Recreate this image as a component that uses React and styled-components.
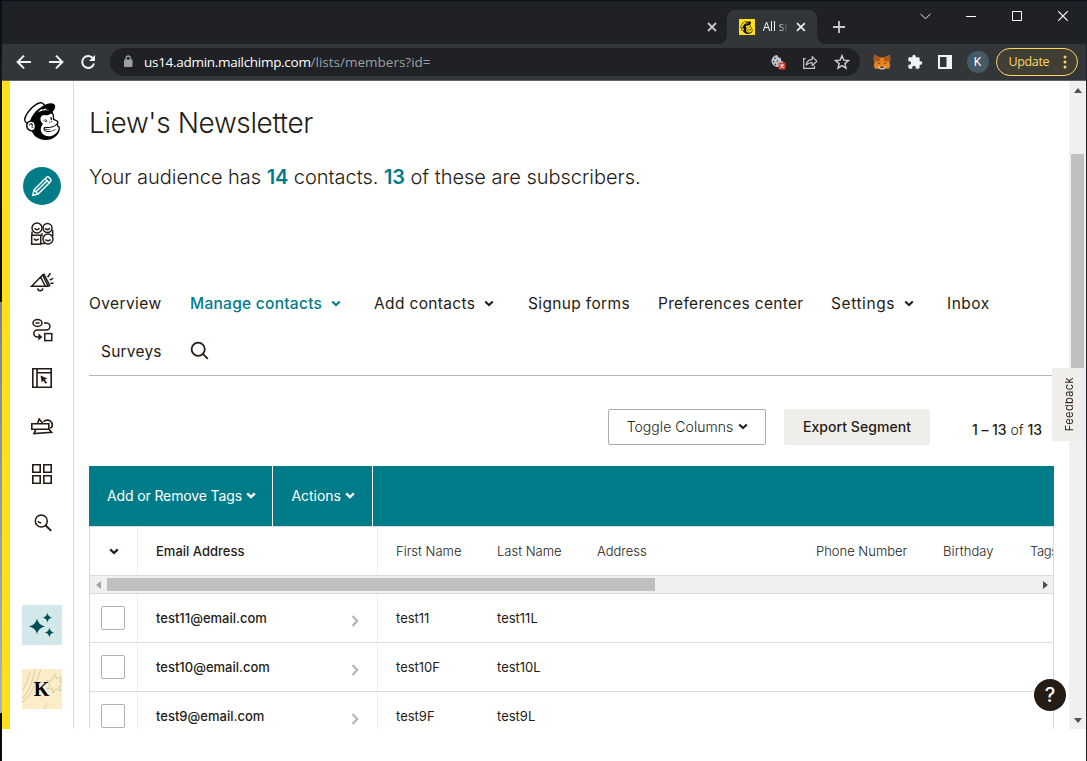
import React from "react";
import styled, { createGlobalStyle, css } from "styled-components";
import { SiMailchimp } from "react-icons/si";

const teal = "#007c89";
const ink = "#241c15";
const sans = `Inter, "Liberation Sans", sans-serif`;
const chromeFont = `"Open Sans", "Noto Sans", sans-serif`;

const Global = createGlobalStyle`
  * { box-sizing: border-box; }
  html, body { margin: 0; padding: 0; background: #fff; overflow: hidden; }
`;

/* ---------- window ---------- */
const Desktop = styled.div`
  display: grid;
  grid-template-columns: 2px 1084px 1px;
  grid-template-rows: 1px 760px;
  width: 1087px;
  height: 761px;
  background: #06121f;
  font-family: ${sans};
  color: ${ink};
`;
const TopEdge = styled.div`
  grid-column: 1 / -1;
  background: #06121f;
`;
const LeftEdge = styled.div`
  background: linear-gradient(#06121f 60px, #16161a 60px, #101014 301px, #7e8287 301px, #a9b2bb 712px, #0c0c0e 712px);
`;
const RightEdge = styled.div`
  background: #17202b;
`;
const Window = styled.div`
  display: flex;
  flex-direction: column;
  min-width: 0;
  background: #fff;
`;

/* ---------- title bar ---------- */
const TitleBar = styled.div`
  display: flex;
  height: 43px;
  background: #202124;
  & > * { flex-shrink: 0; }
`;
const InactiveTab = styled.div`
  display: flex;
  align-items: center;
  justify-content: flex-end;
  width: 725px;
  padding: 9px 10px 0 0;
`;
const ActiveTab = styled.div`
  position: relative;
  display: flex;
  align-items: center;
  width: 90px;
  margin-top: 9px;
  padding: 0 11px 0 12px;
  border-radius: 8px 8px 0 0;
  background: #323639;
  &::before, &::after {
    content: "";
    position: absolute;
    bottom: 0;
    width: 8px;
    height: 8px;
  }
  &::before { left: -8px; background: radial-gradient(circle at 0 0, transparent 7.5px, #323639 8px); }
  &::after { right: -8px; background: radial-gradient(circle at 100% 0, transparent 7.5px, #323639 8px); }
`;
const Favicon = styled.span`
  display: flex;
  align-items: center;
  justify-content: center;
  width: 16px;
  height: 16px;
  background: #ffe01b;
  color: #111;
`;
const TabTitle = styled.span`
  width: 26px;
  margin: 0 8px 0 8px;
  padding-bottom: 1px;
  overflow: hidden;
  white-space: nowrap;
  font: 12px ${chromeFont};
  letter-spacing: -0.2px;
  color: #f1f3f4;
  -webkit-mask-image: linear-gradient(90deg, #000 60%, transparent);
  mask-image: linear-gradient(90deg, #000 60%, transparent);
`;
const NewTab = styled.div`
  display: flex;
  align-items: center;
  width: 91px;
  padding: 9px 0 0 15px;
`;
const WindowControls = styled.div`
  display: grid;
  grid-template-columns: repeat(4, 46px);
  justify-items: center;
  align-items: center;
  height: 30px;
  margin-left: -6px;
`;

/* ---------- address bar ---------- */
const AddressRow = styled.div`
  display: flex;
  align-items: center;
  height: 37px;
  padding: 0 7px 1px 14px;
  border-bottom: 1px solid #616265;
  background: #323639;
  & > * { flex-shrink: 0; }
`;
const NavIcons = styled.div`
  display: flex;
  gap: 16px;
  width: 94px;
`;
const UrlField = styled.div`
  display: flex;
  align-items: center;
  width: 750px;
  height: 28px;
  padding: 0 10px 0 13px;
  border-radius: 14px;
  background: #202124;
`;
const UrlText = styled.div`
  flex: 1;
  margin-left: 11px;
  white-space: nowrap;
  font: 13.5px ${chromeFont};
  color: #9aa0a6;
`;
const UrlHost = styled.span`
  color: #fff;
  letter-spacing: -0.29px;
`;
const UrlActions = styled.div`
  display: flex;
  align-items: center;
  gap: 16px;
`;
const Extensions = styled.div`
  display: flex;
  align-items: center;
  gap: 15.5px;
  margin-left: 13px;
`;
const ProfileDot = styled.span`
  display: flex;
  align-items: center;
  justify-content: center;
  width: 22px;
  height: 22px;
  margin-left: -1px;
  border-radius: 50%;
  background: #455a64;
  color: #fff;
  font: 12px Roboto, sans-serif;
`;
const UpdateButton = styled.div`
  display: flex;
  align-items: center;
  justify-content: space-between;
  width: 82px;
  height: 28px;
  margin-left: 7px;
  padding: 0 10px 0 12px;
  border: 1px solid #fdd663;
  border-radius: 14px;
  background: #403e35;
  color: #fdd663;
  font: 12.5px ${chromeFont};
  letter-spacing: -0.35px;
`;

/* ---------- page ---------- */
const Page = styled.div`
  display: flex;
  height: 648px;
  border-left: 8px solid #ffe01b;
  overflow: hidden;
`;
const Sidebar = styled.aside`
  display: flex;
  flex-direction: column;
  align-items: center;
  width: 64px;
  padding-top: 21px;
  border-right: 1px solid #dbdbd9;
`;
const Logo = styled.div`
  height: 60px;
`;
const SideItem = styled.div`
  display: flex;
  align-items: center;
  justify-content: center;
  width: 48px;
  height: 48px;
`;
const EditCircle = styled.span`
  display: flex;
  align-items: center;
  justify-content: center;
  width: 38px;
  height: 38px;
  border-radius: 50%;
  background: ${teal};
`;
const SideTile = styled.div`
  display: flex;
  align-items: center;
  justify-content: center;
  width: 40px;
  height: 40px;
  margin-top: ${(p) => p.$gap}px;
  overflow: hidden;
  background: ${(p) => p.$bg};
`;
const MonogramStack = styled.div`
  display: grid;
  place-items: center;
  & > * { grid-area: 1 / 1; }
`;
const Monogram = styled.span`
  color: #000;
  font: bold 20px "Liberation Serif", serif;
`;
const Main = styled.main`
  width: 995px;
  padding-left: 15px;
`;
const Title = styled.h1`
  margin: 0;
  padding-top: 25px;
  font-size: 28px;
  line-height: 34px;
  font-weight: 300;
  letter-spacing: -0.38px;
`;
const Summary = styled.p`
  margin: 22px 0 0;
  font-size: 20px;
  line-height: 30px;
  font-weight: 300;
  letter-spacing: -0.03px;
  white-space: nowrap;
`;
const Count = styled.span`
  color: ${teal};
  font-weight: 600;
  letter-spacing: -0.1px;
`;
const Tabs = styled.nav`
  display: grid;
  grid-template-columns: 101px 184px 154px 130px 173px 116px 60px;
  grid-auto-rows: 48px;
  width: 963px;
  margin-top: 87px;
  border-bottom: 1px solid #b5b5b3;
`;
const Tab = styled.a`
  display: flex;
  align-items: center;
  gap: 9px;
  padding-left: ${(p) => p.$indent || 0}px;
  white-space: nowrap;
  font-size: 15.5px;
  letter-spacing: ${(p) => p.$ls ?? 0.35}px;
  color: ${(p) => (p.$active ? teal : ink)};
  font-weight: ${(p) => (p.$active ? 500 : 400)};
`;
const Controls = styled.div`
  display: flex;
  align-items: center;
  height: 36px;
  margin: 33px 0 21px;
  padding-left: 519px;
  white-space: nowrap;
`;
const Button = styled.button`
  display: flex;
  align-items: center;
  justify-content: center;
  gap: 5px;
  width: ${(p) => p.$w}px;
  height: 36px;
  margin-right: 18px;
  padding: 0 0 1px ${(p) => (p.$filled ? 0 : 1)}px;
  font-family: ${sans};
  font-size: 14px;
  color: ${ink};
  border-radius: 2px;
  letter-spacing: 0.05px;
  ${(p) =>
    p.$filled
      ? css`background: #efeeea; border: 0; font-weight: 500;`
      : css`background: #fff; border: 1px solid #adadab; font-weight: 300;`}
`;
const Range = styled.span`
  padding: 5px 0 0 24px;
  font-size: 14px;
  font-weight: 300;
  letter-spacing: -0.05px;
  b { font-weight: 500; }
`;
const Table = styled.section`
  width: 965px;
`;
const ActionBar = styled.div`
  display: flex;
  height: 60px;
  background: ${teal};
`;
const Action = styled.div`
  display: flex;
  align-items: center;
  gap: 4.5px;
  width: ${(p) => p.$w}px;
  padding: 0 0 1px ${(p) => p.$pad}px;
  border-right: 1px solid #fff;
  color: #fff;
  font-size: 14px;
  letter-spacing: ${(p) => p.$ls || 0}px;
  white-space: nowrap;
`;
const Row = styled.div`
  display: grid;
  grid-template-columns: 48px 240px 119px 100px 219px 127px 87px 23px;
  height: 49px;
  border: solid #dbdbd9;
  border-width: ${(p) => (p.$head ? "1px 1px 0" : "0 1px 1px")};
  overflow: hidden;
  font-size: 13px;
  font-weight: 300;
`;
const Cell = styled.div`
  display: flex;
  align-items: center;
  justify-content: ${(p) => (p.$center ? "center" : p.$spread ? "space-between" : "flex-start")};
  padding-left: ${(p) => p.$pad || 0}px;
  padding-right: ${(p) => (p.$spread ? 17 : 0)}px;
  border-right: ${(p) => (p.$line ? "1px solid #efefed" : "0")};
  font-weight: ${(p) => (p.$strong ? 500 : p.$plain ? 400 : 300)};
  letter-spacing: ${(p) => p.$ls || 0}px;
  white-space: nowrap;
`;
const Checkbox = styled.span`
  width: 24px;
  height: 24px;
  margin-right: 1px;
  border: 1px solid #b0b0ae;
  border-radius: 2px;
`;
const HScroll = styled.div`
  display: flex;
  align-items: center;
  justify-content: space-between;
  height: 19px;
  border: 1px solid #dbdbd9;
  background: #f0f0f0;
  padding: 0 5px 0 6px;
`;
const HThumb = styled.span`
  width: 548px;
  height: 13px;
  margin: 0 auto 0 6px;
  background: #bfbfbf;
`;
const VScroll = styled.div`
  display: flex;
  flex-direction: column;
  align-items: center;
  width: 17px;
  padding: 7px 0 6px;
  background: #f0f0f0;
`;
const VThumb = styled.span`
  width: 13px;
  height: 234px;
  margin: 61px 0 auto;
  background: #bfbfbf;
`;
const Feedback = styled.div`
  position: absolute;
  left: 1052px;
  top: 368px;
  display: flex;
  align-items: center;
  justify-content: center;
  width: 34px;
  height: 73px;
  background: #efeeea;
  color: ${ink};
  font-size: 11px;
  letter-spacing: 0.4px;
  span { writing-mode: vertical-rl; transform: rotate(180deg); }
`;
const Help = styled.div`
  position: absolute;
  left: 1034px;
  top: 679px;
  display: flex;
  align-items: center;
  justify-content: center;
  width: 32px;
  height: 32px;
  border-radius: 50%;
  background: ${ink};
  color: #fff;
  font: 500 20px ${sans};
`;

/* ---------- icons ---------- */
const Line = ({ w, h = w, box = `0 0 ${w} ${h}`, sw = 1.5, color = ink, children }) => (
  <svg width={w} height={h} viewBox={box} fill="none" stroke={color} strokeWidth={sw}>
    {children}
  </svg>
);
const Chevron = ({ sw = 2 }) => (
  <Line w={10} h={7} sw={sw} color="currentColor"><path d="M1.2 1.4 5 5 8.8 1.4" /></Line>
);
const Close = ({ color = "#e8eaed" }) => (
  <Line w={10} sw={1.8} color={color}><path d="m1 1 8 8M9 1 1 9" /></Line>
);
const Triangle = ({ w, h, d, color = "#505050" }) => (
  <svg width={w} height={h} viewBox={`0 0 ${w} ${h}`} fill={color}><path d={d} /></svg>
);
const Pencil = () => (
  <Line w={22} sw={1.4} color="#fff">
    <path d="M1.8 20.2 3 14.9 15.6 2.3q1.1-1 2.2 0l1.9 1.9q1 1.1 0 2.2L7.1 19ZM3 14.9 7.1 19M14.2 3.8l4 4M5.2 16.6 16.2 5.7" />
  </Line>
);
const Audience = () => (
  <Line w={24} sw={1.5}>
    <circle cx="7" cy="6" r="5" /><circle cx="17.5" cy="6" r="4.5" />
    <rect x="1.7" y="13.2" width="9" height="9" /><circle cx="18" cy="17" r="5" />
    <path d="M2 9.5v4M12 11.2v3M22.6 8l.2 6M10.8 21.4h4M4.5 6.2q2.5 3 5 0M15 6.4q2.4 2.4 5 0M4 16.8q2.2 2.8 4.6 0M15.4 17.4q2.6 2.8 5.2 0" />
  </Line>
);
const Megaphone = () => (
  <Line w={24} box="0 -2 24 24" sw={1.5}>
    <path d="M1.6 14.2 12.6 3l5.5 11.2ZM10.6 5l4.6 9M18.1 14.2l1.6-.7L14 2.3l-1.4.7M7.6 16.4q.3 2.4 2.6 2.4t2.6-2.4M17.6 5.3l2.8-4M19.6 8.2l3.6-1.9M20.4 11.2h3.2" />
  </Line>
);
const Journey = () => (
  <Line w={24} sw={1.5}>
    <ellipse cx="7.5" cy="5" rx="4.5" ry="3.4" /><path d="M5.5 5h4" />
    <path d="M14 5h2.5a3.4 3.4 0 0 1 0 6.9H7.3a3.5 3.5 0 0 0 0 7h3.5" />
    <path d="m8.4 15.4 4 3.5-4 3.5Z" fill={ink} stroke="none" />
    <rect x="14.8" y="15.6" width="7" height="7" />
  </Line>
);
const Website = () => (
  <Line w={22} sw={1.6}>
    <path d="M1.8 1.8h18.4v18.4H1.8ZM6 1.8v18.4M6 5.8h14.2" />
    <path d="m9.5 8.5 6.8 2.9-2.5 1.2 2.2 3.1-1.5 1.1-2.2-3.200-1.600 1.800Z" fill={ink} stroke="none" />
  </Line>
);
const Studio = () => (
  <Line w={24} box="0 -2 24 24" sw={1.6}>
    <path d="M1.8 7.8h17v5.4h-17ZM7.6 7.5 9.2 3l3.4 4.2M13.4 5.6q3.6-2.8 7-.5 3 2.7 1.2 6.3l-1.6.6M5.8 13.4 4 17.6l17.6-1.2-2.8-3.4" />
  </Line>
);
const Grid4 = () => (
  <Line w={22} sw={1.6}><path d="M1.8 1.8h7.4v7.4H1.8ZM12.8 1.8h7.4v7.4h-7.4ZM1.8 12.8h7.4v7.4H1.8ZM12.8 12.8h7.4v7.4h-7.4Z" /></Line>
);
const Magnify = () => (
  <Line w={20} box="-1 -1 20 20" sw={1.5}><circle cx="8.3" cy="8" r="6" /><path d="m12.5 12.2 5.7 5.7" strokeWidth="2" /><path d="M5 8.2q1.2 2 3.2 1.5" /></Line>
);
const TabSearch = () => (
  <Line w={20} sw={1.8}><circle cx="8.2" cy="8.2" r="6.6" /><path d="m12.8 12.8 5 5" /></Line>
);
const Sparkles = () => (
  <svg width="28" height="28" viewBox="0 0 28 28" fill="#004e56">
    <path d="M9 7.6q1 6.2 8 7.9-7 1.5-8 8-1-6.5-8-8 7-1.7 8-7.9ZM19.4 1.8q.6 4 4.6 4.9-4 .8-4.6 4.8-.6-4-4.6-4.8 4-.9 4.6-4.9ZM21.4 16.7q.7 4 4.8 4.8-4.1.8-4.8 4.8-.6-4-4.8-4.8 4.2-.8 4.8-4.8Z" />
  </svg>
);
const Doodles = () => (
  <Line w={40} sw={1} color="#d9cba3">
    <path d="M0 30C7 22 11 12 13 0M0 34C10 25 15 12 19 0M0 22Q6 14 8 3M23 40q0-4 3-6M33 5l2 5 4-2-1 5 4 2-5 2 2 5-5-2-3 4-1-5-5 1 3-4-4-4 5 0Z" />
  </Line>
);
const Arrow = ({ back }) => (
  <Line w={16} sw={2} color="#f1f3f4"><path d={back ? "M15 8H2M8 1.6 1.6 8 8 14.4" : "M1 8h13M8 1.6 14.4 8 8 14.4"} /></Line>
);
const Reload = () => (
  <Line w={16} sw={2} color="#f1f3f4"><path d="M13.2 4.6A6 6 0 1 0 14 9.6" /><path d="M15 1v6H9Z" fill="#f1f3f4" stroke="none" /></Line>
);
const Lock = () => (
  <svg width="10" height="13" viewBox="0 0 10 13"><rect x="1" y="4.5" width="8.5" height="7.5" rx="1" fill="#9aa0a6" /><path d="M2.9 5V3.3a2.3 2.3 0 0 1 4.6 0V5" fill="none" stroke="#9aa0a6" strokeWidth="1.3" /></svg>
);
const Cookie = () => (
  <svg width="16" height="16" viewBox="0 0 16 16">
    <path d="M7 1a6 6 0 1 0 6.4 6.8L11 6.5 10.8 4 8.6 3.4Z" fill="#c3c6ca" />
    <g fill="#202124"><circle cx="5" cy="4.3" r=".8" /><circle cx="3.6" cy="7.6" r=".8" /><circle cx="7.4" cy="7" r=".8" /><circle cx="5.5" cy="10.4" r=".8" /></g>
    <rect x="8.5" y="8.5" width="7" height="7" rx="1" fill="#d94235" /><path d="m10.5 10.5 3 3m0-3-3 3" stroke="#fff" strokeWidth="1.2" />
  </svg>
);
const Share = () => (
  <Line w={16} sw={1.2} color="#c3c6ca"><path d="M3.6 4.6H1.7v9.7h10.8v-2.6" /><path d="M4.2 11q.8-5.3 6-5.6V2.6l4.6 4.6-4.6 4.5V8.7Q6.4 8.6 4.2 11Z" strokeLinejoin="round" /></Line>
);
const Star = () => (
  <Line w={16} sw={1.4} color="#d0d3d6"><path d="m8 1.7 1.8 4.4 4.7.4-3.6 3.1 1.1 4.6L8 11.7l-4 2.5 1.1-4.6L1.5 6.5l4.7-.4Z" /></Line>
);
const Fox = () => (
  <svg width="18" height="16" viewBox="0 0 18 16">
    <path d="M1.3.8 7 3.5h4L16.7.8l.8 3.8-1 4 .8 3.4-1.5 3-3.8-.7-1.5 1.2h-3L6 14.3l-3.8.7-1.5-3L1.500 8.600l-1-4Z" fill="#e8831d" />
    <path d="M1.3.8 7.6 4.5 6.5 7 1 7.5.5 4.6ZM16.7.8l-6.3 3.7L11.5 7l5.5.5.5-2.9Z" fill="#a9561f" />
    <path d="m6 11.3 1.5 2.2h3l1.500-2.200 1 3L10.800 15.300H7.200L5 14.300Z" fill="#c9bcb1" />
    <path d="m4.3 8.3 2.5.6-.5 1.3ZM13.7 8.3l-2.5.6.5 1.3ZM7.4 12.8h3.2v1.3H7.4Z" fill="#33303a" />
  </svg>
);
const Puzzle = () => (
  <svg width="16" height="16" viewBox="0 0 24 24" fill="#f1f3f4"><path d="M20.5 11H19V7c0-1.1-.9-2-2-2h-4V3.5a2.5 2.5 0 0 0-5 0V5H4c-1.1 0-2 .9-2 2v3.8h1.5a2.7 2.7 0 0 1 0 5.4H2V20c0 1.1.9 2 2 2h3.8v-1.5a2.7 2.7 0 0 1 5.4 0V22H17c1.1 0 2-.9 2-2v-4h1.5a2.5 2.5 0 0 0 0-5Z" /></svg>
);
const SidePanel = () => (
  <svg width="14" height="14" viewBox="0 0 14 14"><path fillRule="evenodd" fill="#f1f3f4" d="M0 0h14v14H0ZM2 2v10h6.5V2Z" /></svg>
);
const Dots = () => (
  <svg width="4" height="14" viewBox="0 0 4 14" fill="#fdd663"><circle cx="2" cy="2" r="1.5" /><circle cx="2" cy="7" r="1.5" /><circle cx="2" cy="12" r="1.5" /></svg>
);

const sideIcons = [Audience, Megaphone, Journey, Website, Studio, Grid4, Magnify];
const tabs = [
  { label: "Overview", ls: 0.4 },
  { label: "Manage contacts", active: true, menu: true, ls: 0.27 },
  { label: "Add contacts", menu: true },
  { label: "Signup forms" },
  { label: "Preferences center", ls: 0.31 },
  { label: "Settings", menu: true, ls: 0.58 },
  { label: "Inbox", ls: 0.5 },
  { label: "Surveys", indent: 12, ls: 0.22 },
];
const contacts = [
  ["test11@email.com", "test11", "test11L"],
  ["test10@email.com", "test10F", "test10L"],
  ["test9@email.com", "test9F", "test9L"],
];

export default function App() {
  return (
    <Desktop>
      <Global />
      <TopEdge />
      <LeftEdge />
      <Window>
        <TitleBar>
          <InactiveTab><Close color="#c5c7ca" /></InactiveTab>
          <ActiveTab>
            <Favicon><SiMailchimp size={13} /></Favicon>
            <TabTitle>All subscribers</TabTitle>
            <Close />
          </ActiveTab>
          <NewTab><Line w={14} sw={1.8} color="#c9cbce"><path d="M7 1v12M1 7h12" /></Line></NewTab>
          <WindowControls>
            <Line w={11} h={7} sw={1} color="#e8eaed"><path d="m.5.8 5 5 5-5" /></Line>
            <Line w={10} h={2} sw={1} color="#fff"><path d="M0 1.5h10" /></Line>
            <Line w={10} sw={1} color="#fff"><path d="M.5.5h9v9h-9Z" /></Line>
            <Line w={10} sw={1.2} color="#fff"><path d="m.3.3 9.4 9.4m0-9.4-9.4 9.4" /></Line>
          </WindowControls>
        </TitleBar>
        <AddressRow>
          <NavIcons><Arrow back /><Arrow /><Reload /></NavIcons>
          <UrlField>
            <Lock />
            <UrlText><UrlHost>us14.admin.mailchimp.com</UrlHost>/lists/members?id=</UrlText>
            <UrlActions><Cookie /><Share /><Star /></UrlActions>
          </UrlField>
          <Extensions><Fox /><Puzzle /><SidePanel /><ProfileDot>K</ProfileDot></Extensions>
          <UpdateButton>Update<Dots /></UpdateButton>
        </AddressRow>
        <Page>
          <Sidebar>
            <Logo><SiMailchimp size={38} color="#000" /></Logo>
            <SideItem><EditCircle><Pencil /></EditCircle></SideItem>
            {sideIcons.map((Icon, i) => <SideItem key={i}><Icon /></SideItem>)}
            <SideTile $bg="#d3e8ea" $gap={59}><Sparkles /></SideTile>
            <SideTile $bg="#faedc8" $gap={24}>
              <MonogramStack><Doodles /><Monogram>K</Monogram></MonogramStack>
            </SideTile>
          </Sidebar>
          <Main>
            <Title>Liew's Newsletter</Title>
            <Summary>Your audience has <Count>14</Count> contacts. <Count>13</Count> of these are subscribers.</Summary>
            <Tabs>
              {tabs.map((t) => (
                <Tab key={t.label} $active={t.active} $indent={t.indent} $ls={t.ls}>{t.label}{t.menu && <Chevron />}</Tab>
              ))}
              <Tab><TabSearch /></Tab>
            </Tabs>
            <Controls>
              <Button $w={158}>Toggle Columns<Chevron /></Button>
              <Button $w={146} $filled>Export Segment</Button>
              <Range><b>1 – 13</b> of <b>13</b></Range>
            </Controls>
            <Table>
              <ActionBar>
                <Action $w={184} $pad={18} $ls={-0.13}>Add or Remove Tags<Chevron sw={2.4} /></Action>
                <Action $w={100} $pad={18.5} $ls={-0.05}>Actions<Chevron sw={2.4} /></Action>
              </ActionBar>
              <Row $head>
                <Cell $center $line><Chevron sw={2.2} /></Cell>
                <Cell $pad={18} $line $strong>Email Address</Cell>
                <Cell $pad={18}>First Name</Cell>
                <Cell>Last Name</Cell>
                <Cell>Address</Cell>
                <Cell>Phone Number</Cell>
                <Cell $ls={0.1}>Birthday</Cell>
                <Cell $ls={-0.35}>Tags</Cell>
              </Row>
              <HScroll>
                <Triangle w={5} h={8} d="M5 0v8L0 4Z" color="#a3a3a3" />
                <HThumb />
                <Triangle w={5} h={8} d="M0 0v8l5-4Z" />
              </HScroll>
              {contacts.map(([email, first, last]) => (
                <Row key={email}>
                  <Cell $center $line><Checkbox /></Cell>
                  <Cell $pad={18} $line $strong $spread>
                    {email}
                    <Line w={9} h={18} sw={2.2} color="#b5b5b3"><path d="m1.5 7 4.7 5-4.7 5" /></Line>
                  </Cell>
                  <Cell $pad={18} $plain>{first}</Cell>
                  <Cell $plain>{last}</Cell>
                </Row>
              ))}
            </Table>
          </Main>
          <VScroll>
            <Triangle w={8} h={5} d="M0 5 4 0l4 5Z" />
            <VThumb />
            <Triangle w={8} h={5} d="M0 0h8L4 5Z" />
          </VScroll>
        </Page>
      </Window>
      <RightEdge />
      <Feedback><span>Feedback</span></Feedback>
      <Help>?</Help>
    </Desktop>
  );
}
